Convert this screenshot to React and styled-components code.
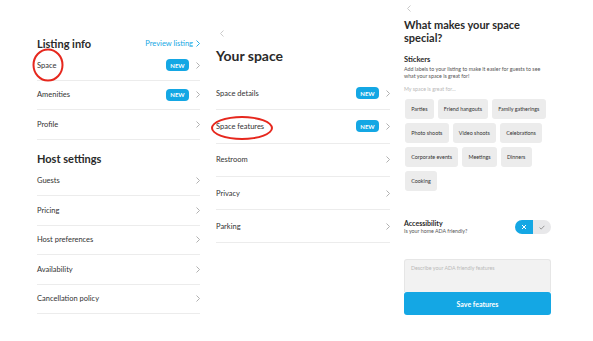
import React from 'react'
import styled, { createGlobalStyle } from 'styled-components'

const Global = createGlobalStyle`
    html, body {
        margin: 0;
        padding: 0;
        background: #fff;
    }
    body {
        font-family: Lato, "Noto Sans", "Liberation Sans", sans-serif;
        color: #2b2b2b;
        -webkit-font-smoothing: antialiased;
    }
`

const BLUE = '#14a7e4'

const Page = styled.div`
    display: flex;
    align-items: flex-start;
    width: 593px;
    height: 341px;
    padding-left: 37px;
    box-sizing: border-box;
    overflow: hidden;
`

const Panel = styled.section`
    display: flex;
    flex-direction: column;
    width: ${p => p.$w}px;
    margin-left: ${p => p.$ml || 0}px;
    padding-top: ${p => p.$pt || 0}px;
    flex-shrink: 0;
`

const HeadRow = styled.div`
    display: flex;
    align-items: center;
    justify-content: space-between;
    height: 15px;
    margin-top: ${p => p.$mt || 0}px;
`

const Heading = styled.h2`
    margin: 0;
    font-size: 11px;
    font-weight: 700;
    line-height: 14px;
    color: #2a2a2a;
`

const PreviewLink = styled.a`
    display: flex;
    align-items: center;
    gap: 3px;
    font-size: 7.5px;
    color: ${BLUE};
`

const Row = styled.div`
    display: flex;
    align-items: center;
    height: ${p => p.$h}px;
    border-bottom: 1px solid #ececec;
    font-size: 7.5px;
    color: #333;
`

const Label = styled.span`
    position: relative;
    flex: 1;
`

const LabelText = styled.span`
    position: relative;
    display: inline-block;
`

const Mark = styled.span`
    position: absolute;
    left: 50%;
    top: 50%;
    width: ${p => p.$w}px;
    height: ${p => p.$h}px;
    transform: translate(-50%, -50%) translate(${p => p.$dx || 0}px, ${p => p.$dy || 0}px);
    border: 2.5px solid #e6271d;
    border-radius: 50%;
    box-sizing: border-box;
`

const Badge = styled.span`
    display: inline-flex;
    align-items: center;
    justify-content: center;
    width: 23px;
    height: 12px;
    border-radius: 4px;
    background: ${BLUE};
    color: #fff;
    font-size: 6px;
    font-weight: 700;
    margin-right: 7px;
`

const Back = styled.div`
    height: 8px;
    padding-left: ${p => p.$pl || 0}px;
    display: flex;
    align-items: center;
`

const Title = styled.h1`
    margin: ${p => p.$mt || 0}px 0 0;
    font-size: ${p => p.$fs}px;
    line-height: ${p => p.$lh}px;
    font-weight: 700;
    color: #2a2a2a;
`

const List = styled.div`
    display: flex;
    flex-direction: column;
    margin-top: ${p => p.$mt || 0}px;
`

const SubTitle = styled.div`
    margin-top: ${p => p.$mt || 0}px;
    font-size: 7.5px;
    line-height: 10px;
    font-weight: 700;
    color: #2a2a2a;
`

const Small = styled.p`
    margin: ${p => p.$mt || 0}px 0 0;
    font-size: 5.3px;
    line-height: 7px;
    color: ${p => p.$muted ? '#b9b9b9' : '#555'};
`

const Chips = styled.div`
    display: flex;
    flex-wrap: wrap;
    gap: 4px;
    margin-top: 6.5px;
    padding-left: 1px;
`

const Chip = styled.span`
    display: inline-flex;
    align-items: center;
    height: 20px;
    padding: 0 6.2px;
    border-radius: 3px;
    background: #ececec;
    font-size: 5.4px;
    color: #333;
`

const AccessRow = styled.div`
    display: flex;
    align-items: center;
    justify-content: space-between;
    margin-top: 28px;
`

const AccessTitle = styled.div`
    font-size: 7px;
    line-height: 9px;
    font-weight: 700;
    color: #2a2a2a;
`

const Toggle = styled.div`
    display: flex;
    width: 36px;
    height: 14px;
    border-radius: 7px;
    overflow: hidden;
`

const Half = styled.span`
    flex: 1;
    display: flex;
    align-items: center;
    justify-content: center;
    background: ${p => p.$on ? BLUE : '#e8e8ea'};
`

const TextBox = styled.div`
    margin-top: 24px;
    height: 33px;
    padding: 5px 6px;
    box-sizing: border-box;
    background: #f2f2f2;
    border: 1px solid #e6e6e6;
    border-bottom: none;
    border-radius: 3px 3px 0 0;
    font-size: 5.3px;
    color: #b9b9b9;
`

const SaveButton = styled.button`
    height: 23px;
    border: none;
    border-radius: 3px;
    background: ${BLUE};
    color: #fff;
    font-family: inherit;
    font-size: 7px;
    font-weight: 700;
    padding: 0;
`

const Chevron = ({ color = '#a8a8a8', left }) => (
    <svg width="4" height="7" viewBox="0 0 4 7">
        <polyline
            points={left ? '3.5,0.5 0.5,3.5 3.5,6.5' : '0.5,0.5 3.5,3.5 0.5,6.5'}
            fill="none"
            stroke={color}
            strokeWidth="0.9"
        />
    </svg>
)

const Cross = () => (
    <svg width="6" height="6" viewBox="0 0 6 6">
        <path d="M1 1L5 5M5 1L1 5" stroke="#fff" strokeWidth="1" />
    </svg>
)

const Check = () => (
    <svg width="6" height="5" viewBox="0 0 6 5">
        <polyline points="0.6,2.6 2.2,4.1 5.4,0.8" fill="none" stroke="#8c8c8c" strokeWidth="0.9" />
    </svg>
)

const ListItem = ({ label, h, isNew, mark }) => (
    <Row $h={h}>
        <Label>
            <LabelText>
                {label}
                {mark && <Mark {...mark} />}
            </LabelText>
        </Label>
        {isNew && <Badge>NEW</Badge>}
        <Chevron />
    </Row>
)

const listing = [
    { label: 'Space', isNew: true, mark: { $w: 31, $h: 33, $dx: 1, $dy: 0 } },
    { label: 'Amenities', isNew: true },
    { label: 'Profile' },
]

const host = ['Guests', 'Pricing', 'Host preferences', 'Availability', 'Cancellation policy']

const space = [
    { label: 'Space details', isNew: true },
    { label: 'Space features', isNew: true, mark: { $w: 62, $h: 24, $dx: 2, $dy: 2 } },
    { label: 'Restroom' },
    { label: 'Privacy' },
    { label: 'Parking' },
]

const stickers = [
    'Parties', 'Friend hangouts', 'Family gatherings',
    'Photo shoots', 'Video shoots', 'Celebrations',
    'Corporate events', 'Meetings', 'Dinners',
    'Cooking',
]

const App = () => (
    <>
    <Global />
    <Page>
        <Panel $w={163} $pt={36}>
            <HeadRow>
                <Heading>Listing info</Heading>
                <PreviewLink>Preview listing <Chevron color={BLUE} /></PreviewLink>
            </HeadRow>
            <List>
                {listing.map(i => <ListItem key={i.label} h={28.5} {...i} />)}
            </List>
            <HeadRow $mt={12}>
                <Heading>Host settings</Heading>
            </HeadRow>
            <List>
                {host.map(l => <ListItem key={l} h={28.5} label={l} />)}
            </List>
        </Panel>

        <Panel $w={174} $ml={16} $pt={29}>
            <Back $pl={4}><Chevron left color="#c4c4c4" /></Back>
            <Title $fs={14} $lh={18} $mt={10}>Your space</Title>
            <List $mt={12}>
                {space.map(i => <ListItem key={i.label} h={32.3} {...i} />)}
            </List>
        </Panel>

        <Panel $w={147} $ml={14} $pt={4}>
            <Back $pl={3}><Chevron left color="#c4c4c4" /></Back>
            <Title $fs={11} $lh={12.5} $mt={7}>What makes your space special?</Title>
            <SubTitle $mt={11}>Stickers</SubTitle>
            <Small $mt={0.5}>Add labels to your listing to make it easier for guests to see what your space is great for!</Small>
            <Small $mt={6} $muted>My space is great for...</Small>
            <Chips>
                {stickers.map(s => <Chip key={s}>{s}</Chip>)}
            </Chips>
            <AccessRow>
                <div>
                    <AccessTitle>Accessibility</AccessTitle>
                    <Small>Is your home ADA friendly?</Small>
                </div>
                <Toggle>
                    <Half $on><Cross /></Half>
                    <Half><Check /></Half>
                </Toggle>
            </AccessRow>
            <TextBox>Describe your ADA friendly features</TextBox>
            <SaveButton>Save features</SaveButton>
        </Panel>
    </Page>
    </>
)

export default App
